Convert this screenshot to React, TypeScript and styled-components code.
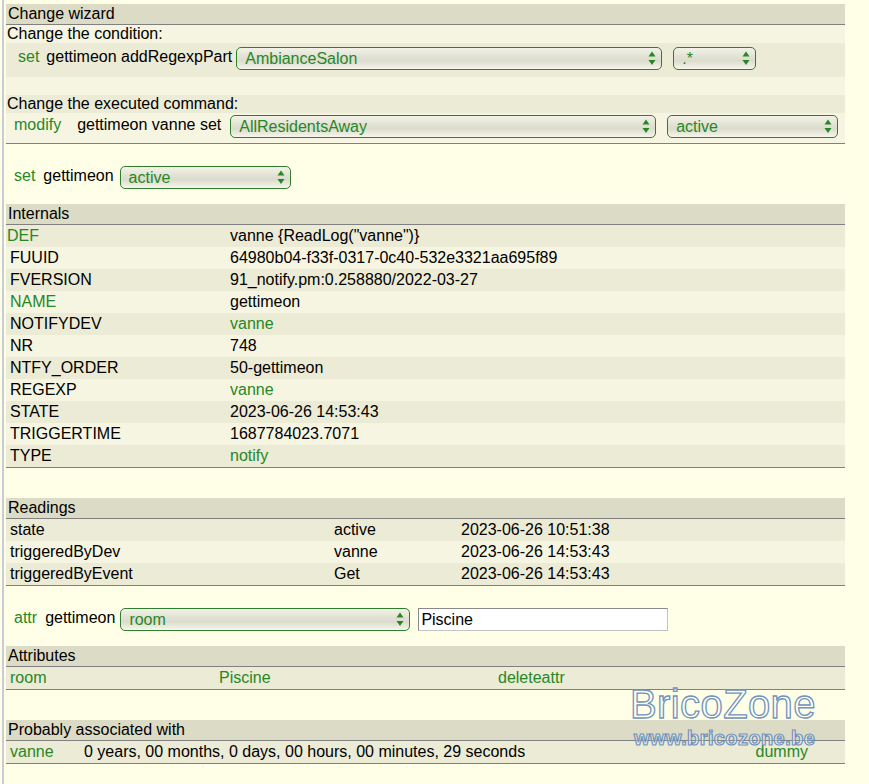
import React from 'react';
import styled, { createGlobalStyle } from 'styled-components';

const GREEN = '#278727';

const GlobalStyle = createGlobalStyle`
    html, body {
        margin: 0;
        padding: 0;
        background: #ffffe8;
    }
    body {
        font-family: "Liberation Sans", Arial, Helvetica, sans-serif;
        font-size: 16px;
        color: #000;
    }
`;

type Tone = 'odd' | 'even' | 'none';

const toneBg = (t?: Tone) =>
    t === 'odd' ? '#ecebd6' : t === 'even' ? '#f6f5e1' : 'transparent';

const Frame = styled.div`
    position: relative;
    box-sizing: border-box;
    min-height: 784px;
    margin-left: 2px;
    padding-left: 2px;
    border-left: 2px solid #c9ccd6;
`;

const Content = styled.div`
    width: 839px;
    padding-top: 4px;
`;

const Block = styled.section<{ $mt?: number }>`
    margin-top: ${(p) => p.$mt ?? 0}px;
    border-bottom: 1px solid #808080;
`;

const BlockHeader = styled.div`
    height: 20px;
    line-height: 20px;
    padding-left: 2px;
    background: #dcdbc5;
    border-bottom: 1px solid #808080;
`;

const TextRow = styled.div<{ $tone?: Tone; $h: number }>`
    height: ${(p) => p.$h}px;
    line-height: ${(p) => p.$h}px;
    padding-left: 1px;
    background: ${(p) => toneBg(p.$tone)};
`;

const CmdRow = styled.div<{ $tone?: Tone; $pt: number; $pb: number; $mt?: number }>`
    display: flex;
    align-items: center;
    height: 23px;
    margin-top: ${(p) => p.$mt ?? 0}px;
    padding-top: ${(p) => p.$pt}px;
    padding-bottom: ${(p) => p.$pb}px;
    background: ${(p) => toneBg(p.$tone)};
`;

const CmdLink = styled.span<{ $ml: number }>`
    margin-left: ${(p) => p.$ml}px;
    margin-bottom: 4px;
    line-height: 18px;
    color: ${GREEN};
    white-space: nowrap;
`;

const CmdText = styled.span<{ $ml: number }>`
    margin-left: ${(p) => p.$ml}px;
    margin-bottom: 4px;
    line-height: 18px;
    white-space: nowrap;
`;

const Picker = styled.div<{ $w: number; $ml: number }>`
    box-sizing: border-box;
    flex-shrink: 0;
    display: flex;
    align-items: center;
    justify-content: space-between;
    width: ${(p) => p.$w}px;
    height: 23px;
    margin-left: ${(p) => p.$ml}px;
    padding: 0 5px 0 8px;
    border: 1px solid #2f7f2f;
    border-radius: 5px;
    background: linear-gradient(
        to bottom,
        #f2f2e8 0%,
        #e4e4d6 35%,
        #dcdccd 60%,
        #ebebdf 85%,
        #f7f7ef 100%
    );
    color: ${GREEN};
    line-height: 21px;
`;

const TextInput = styled.input<{ $w: number; $ml: number }>`
    box-sizing: border-box;
    flex-shrink: 0;
    width: ${(p) => p.$w}px;
    height: 23px;
    margin-left: ${(p) => p.$ml}px;
    padding: 0 2px;
    border: 1px solid;
    border-color: #8a8a8a #c4c4c4 #c4c4c4 #8a8a8a;
    background: #fff;
    font: inherit;
    color: #000;
    outline: none;
`;

const DataRow = styled.div<{ $cols: string; $tone?: Tone }>`
    display: grid;
    grid-template-columns: ${(p) => p.$cols};
    height: 22px;
    line-height: 22px;
    background: ${(p) => toneBg(p.$tone)};
`;

const Cell = styled.div<{ $link?: boolean; $pl?: number; $pr?: number; $right?: boolean }>`
    padding-left: ${(p) => p.$pl ?? 4}px;
    padding-right: ${(p) => p.$pr ?? 0}px;
    color: ${(p) => (p.$link ? GREEN : '#000')};
    text-align: ${(p) => (p.$right ? 'right' : 'left')};
    white-space: nowrap;
    overflow: hidden;
`;

// the site stamp drawn over the bottom right of the page
const Watermark = styled.div`
    position: absolute;
    left: 626px;
    top: 684px;
    display: flex;
    flex-direction: column;
    align-items: flex-start;
    pointer-events: none;
`;

const MarkTitle = styled.span`
    font-size: 40px;
    line-height: 41px;
    letter-spacing: 0.4px;
    color: rgba(255, 255, 250, 0.6);
    -webkit-text-stroke: 1.3px #7193bd;
`;

const MarkUrl = styled.span`
    margin-top: 3px;
    margin-left: 4px;
    font-size: 20px;
    font-weight: bold;
    line-height: 20px;
    letter-spacing: 0.4px;
    color: rgba(255, 255, 250, 0.45);
    -webkit-text-stroke: 1.2px #7193bd;
`;

const Arrows = () => (
    <svg width="8" height="15" viewBox="0 0 8 15">
        <polygon points="0.5,5.5 4,0.5 7.5,5.5" fill={GREEN} />
        <polygon points="0.5,9 7.5,9 4,14" fill={GREEN} />
    </svg>
);

const Select = ({ value, w, ml }: { value: string; w: number; ml: number }) => (
    <Picker $w={w} $ml={ml}>
        <span>{value}</span>
        <Arrows />
    </Picker>
);

type Internal = {
    name: string;
    value: string;
    nameLink?: boolean;
    valueLink?: boolean;
    flush?: boolean;
};

const internals: Internal[] = [
    { name: 'DEF', value: 'vanne {ReadLog("vanne")}', nameLink: true, flush: true },
    { name: 'FUUID', value: '64980b04-f33f-0317-0c40-532e3321aa695f89' },
    { name: 'FVERSION', value: '91_notify.pm:0.258880/2022-03-27' },
    { name: 'NAME', value: 'gettimeon', nameLink: true },
    { name: 'NOTIFYDEV', value: 'vanne', valueLink: true },
    { name: 'NR', value: '748' },
    { name: 'NTFY_ORDER', value: '50-gettimeon' },
    { name: 'REGEXP', value: 'vanne', valueLink: true },
    { name: 'STATE', value: '2023-06-26 14:53:43' },
    { name: 'TRIGGERTIME', value: '1687784023.7071' },
    { name: 'TYPE', value: 'notify', valueLink: true },
];

const readings = [
    ['state', 'active', '2023-06-26 10:51:38'],
    ['triggeredByDev', 'vanne', '2023-06-26 14:53:43'],
    ['triggeredByEvent', 'Get', '2023-06-26 14:53:43'],
];

const tone = (i: number): Tone => (i % 2 === 0 ? 'odd' : 'even');

export default function App() {
    return (
        <>
            <GlobalStyle />
            <Frame>
                <Content>
                    <Block>
                        <BlockHeader>Change wizard</BlockHeader>
                        <TextRow $tone="even" $h={18}>
                            Change the condition:
                        </TextRow>
                        <CmdRow $tone="odd" $pt={4} $pb={7}>
                            <CmdLink $ml={12}>set</CmdLink>
                            <CmdText $ml={7}>gettimeon addRegexpPart</CmdText>
                            <Select value="AmbianceSalon" w={426} ml={4} />
                            <Select value=".*" w={83} ml={11} />
                        </CmdRow>
                        <TextRow $tone="even" $h={18} />
                        <TextRow $tone="odd" $h={18}>
                            Change the executed command:
                        </TextRow>
                        <CmdRow $tone="even" $pt={2} $pb={5}>
                            <CmdLink $ml={8}>modify</CmdLink>
                            <CmdText $ml={16}>gettimeon vanne set</CmdText>
                            <Select value="AllResidentsAway" w={426} ml={9} />
                            <Select value="active" w={171} ml={11} />
                        </CmdRow>
                    </Block>

                    <CmdRow $pt={0} $pb={0} $mt={22}>
                        <CmdLink $ml={8}>set</CmdLink>
                        <CmdText $ml={8}>gettimeon</CmdText>
                        <Select value="active" w={171} ml={6} />
                    </CmdRow>

                    <Block $mt={15}>
                        <BlockHeader>Internals</BlockHeader>
                        {internals.map((r, i) => (
                            <DataRow key={r.name} $cols="220px 1fr" $tone={tone(i)}>
                                <Cell $link={r.nameLink} $pl={r.flush ? 1 : 4}>
                                    {r.name}
                                </Cell>
                                <Cell $link={r.valueLink}>{r.value}</Cell>
                            </DataRow>
                        ))}
                    </Block>

                    <Block $mt={30}>
                        <BlockHeader>Readings</BlockHeader>
                        {readings.map((r, i) => (
                            <DataRow key={r[0]} $cols="324px 127px 1fr" $tone={tone(i)}>
                                <Cell>{r[0]}</Cell>
                                <Cell>{r[1]}</Cell>
                                <Cell>{r[2]}</Cell>
                            </DataRow>
                        ))}
                    </Block>

                    <CmdRow $pt={0} $pb={0} $mt={22}>
                        <CmdLink $ml={8}>attr</CmdLink>
                        <CmdText $ml={8}>gettimeon</CmdText>
                        <Select value="room" w={290} ml={5} />
                        <TextInput $w={250} $ml={8} defaultValue="Piscine" />
                    </CmdRow>

                    <Block $mt={15}>
                        <BlockHeader>Attributes</BlockHeader>
                        <DataRow $cols="209px 279px 1fr" $tone="odd">
                            <Cell $link>room</Cell>
                            <Cell $link>Piscine</Cell>
                            <Cell $link>deleteattr</Cell>
                        </DataRow>
                    </Block>

                    <Block $mt={30}>
                        <BlockHeader>Probably associated with</BlockHeader>
                        <DataRow $cols="74px 1fr auto" $tone="odd">
                            <Cell $link>vanne</Cell>
                            <Cell>0 years, 00 months, 0 days, 00 hours, 00 minutes, 29 seconds</Cell>
                            <Cell $link $right $pr={37}>
                                dummy
                            </Cell>
                        </DataRow>
                    </Block>
                </Content>

                <Watermark>
                    <MarkTitle>BricoZone</MarkTitle>
                    <MarkUrl>www.bricozone.be</MarkUrl>
                </Watermark>
            </Frame>
        </>
    );
}
